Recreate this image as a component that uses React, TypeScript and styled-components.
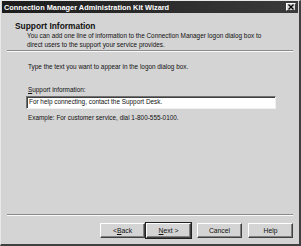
import React from "react";
import styled, { createGlobalStyle } from "styled-components";

const GlobalStyle = createGlobalStyle`
  html, body {
    margin: 0;
    padding: 0;
    background: #d4d4d4;
  }
  * {
    box-sizing: border-box;
  }
`;

const App: React.FC = () => (
  <>
    <GlobalStyle />
    <Window>
      <TitleBar>
        <TitleText>Connection Manager Administration Kit Wizard</TitleText>
        <CloseButton>
          <svg width="6" height="6" viewBox="0 0 6 6">
            <path d="M0.5 0.5 L5.5 5.5 M5.5 0.5 L0.5 5.5" stroke="#000" strokeWidth="1.4" />
          </svg>
        </CloseButton>
      </TitleBar>
      <Header>
        <HeaderTitle>Support Information</HeaderTitle>
        <HeaderText>
          You can add one line of information to the Connection Manager logon dialog box to
          <br />
          direct users to the support your service provides.
        </HeaderText>
      </Header>
      <Separator />
      <Body>
        <Label>Type the text you want to appear in the logon dialog box.</Label>
        <FieldLabel>
          <u>S</u>upport information:
        </FieldLabel>
        <TextBox>For help connecting, contact the Support Desk.</TextBox>
        <Label>Example: For customer service, dial 1-800-555-0100.</Label>
      </Body>
      <Separator />
      <ButtonRow>
        <ButtonPair>
          <Button>
            &lt; <u>B</u>ack
          </Button>
          <Button $default>
            <u>N</u>ext &gt;
          </Button>
        </ButtonPair>
        <Button>Cancel</Button>
        <Button>Help</Button>
      </ButtonRow>
    </Window>
  </>
);

const Window = styled.div`
  width: 301px;
  height: 246px;
  display: flex;
  flex-direction: column;
  background: #d4d4d4;
  border-top: 1px solid #e8e8e8;
  border-left: 1px solid #e8e8e8;
  border-right: 2px solid #404040;
  border-bottom: 2px solid #404040;
  font-family: "Liberation Sans", Arial, sans-serif;
  color: #111;
`;

const TitleBar = styled.div`
  height: 12px;
  margin: 0 1px;
  display: flex;
  align-items: center;
  justify-content: space-between;
  padding: 0 2px 0 2px;
  background: linear-gradient(90deg, #1c1c1c, #3a3a3a);
`;

const TitleText = styled.span`
  color: #fff;
  font-size: 7.4px;
  font-weight: bold;
`;

const CloseButton = styled.div`
  width: 10px;
  height: 8px;
  display: flex;
  align-items: center;
  justify-content: center;
  background: #d4d4d4;
  border-top: 1px solid #fff;
  border-left: 1px solid #fff;
  border-right: 1px solid #404040;
  border-bottom: 1px solid #404040;
`;

const Header = styled.div`
  height: 37px;
  padding: 9px 0 0 14px;
`;

const HeaderTitle = styled.div`
  font-size: 8.4px;
  font-weight: bold;
  line-height: 9px;
`;

const HeaderText = styled.div`
  font-size: 6.4px;
  line-height: 9px;
  padding-left: 12px;
`;

const Separator = styled.div`
  height: 2px;
  margin: 0 6px;
  border-top: 1px solid #8a8a8a;
  border-bottom: 1px solid #fafafa;
`;

const Body = styled.div`
  flex: 1;
  display: flex;
  flex-direction: column;
  padding: 11px 0 0 25px;
`;

const Label = styled.div`
  font-size: 6.4px;
  line-height: 8px;
  padding-left: 2px;
  margin-bottom: 15px;
  &:last-child {
    margin: 5px 0 0;
  }
`;

const FieldLabel = styled.div`
  font-size: 6.4px;
  line-height: 8px;
  padding-left: 2px;
  margin-bottom: 2px;
`;

const TextBox = styled.div`
  width: 250px;
  height: 13px;
  background: #fff;
  font-size: 6.4px;
  line-height: 10px;
  padding-left: 2px;
  border-top: 1px solid #707070;
  border-left: 1px solid #707070;
  border-right: 1px solid #f0f0f0;
  border-bottom: 1px solid #f0f0f0;
  box-shadow: inset 1px 1px 0 #404040;
`;

const ButtonRow = styled.div`
  height: 28px;
  display: flex;
  justify-content: flex-end;
  align-items: flex-start;
  gap: 6px;
  padding: 7px 6px 0 0;
`;

const ButtonPair = styled.div`
  display: flex;
  gap: 1px;
`;

const Button = styled.div<{ $default?: boolean }>`
  width: 45px;
  height: 15px;
  display: flex;
  align-items: center;
  justify-content: center;
  font-size: 6.8px;
  background: #d4d4d4;
  border-top: 1px solid #fff;
  border-left: 1px solid #fff;
  border-right: 1px solid #404040;
  border-bottom: 1px solid #404040;
  box-shadow: ${(p) =>
    p.$default ? "0 0 0 1px #222, inset -1px -1px 0 #808080" : "inset -1px -1px 0 #808080"};
`;

export default App;
